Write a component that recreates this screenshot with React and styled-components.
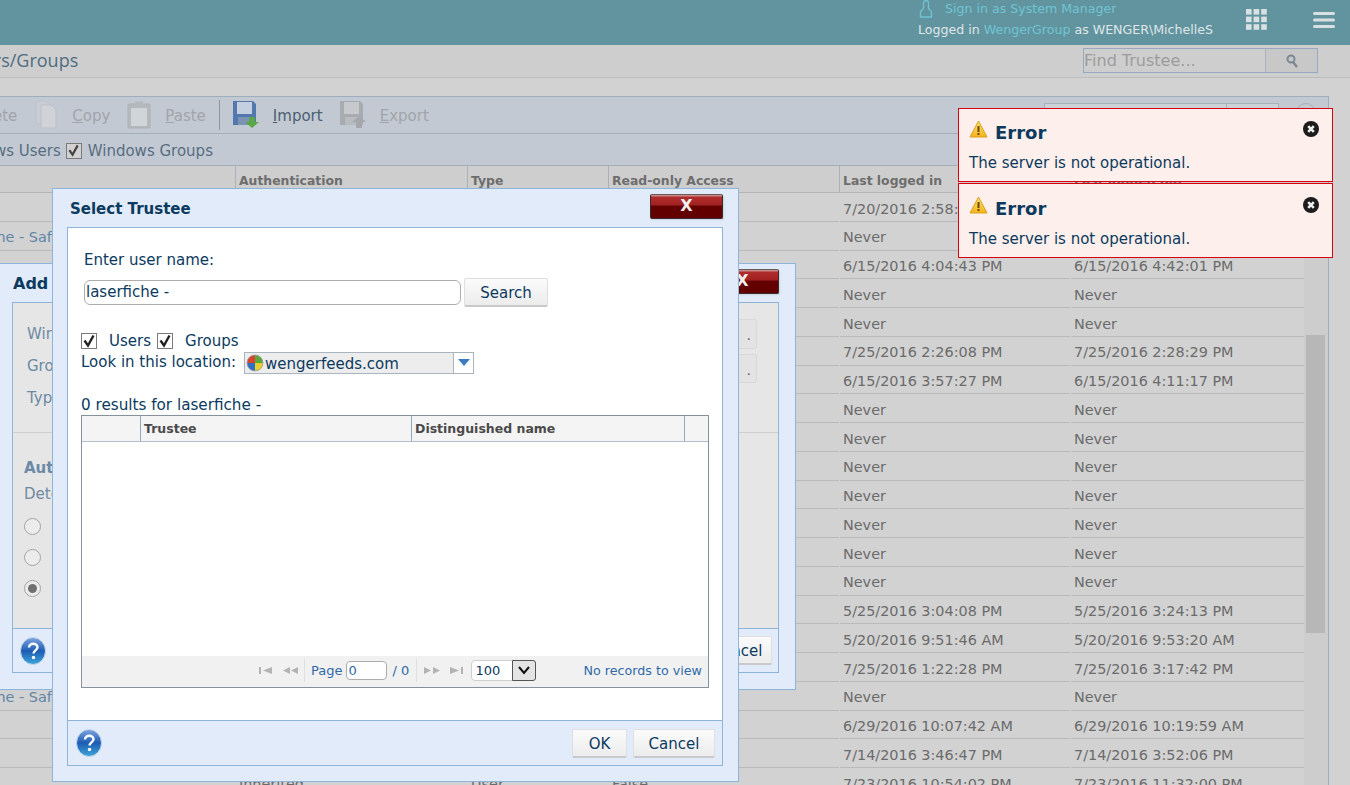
import React from "react";
import styled, { createGlobalStyle } from "styled-components";

const FONT = `"DejaVu Sans", Verdana, sans-serif`;

const Global = createGlobalStyle`
  html, body { margin: 0; padding: 0; height: 100%; overflow: hidden; background: #d2d2d2; }
  #root { width: 1350px; height: 785px; }
  * { box-sizing: border-box; }
`;

const Page = styled.div`
  position: relative;
  width: 1350px;
  height: 785px;
  overflow: hidden;
  font-family: ${FONT};
  font-size: 14.4px;
  color: #6b6b6b;
  display: flex;
  flex-direction: column;
`;

const Header = styled.header`
  flex: 0 0 45px;
  background: #62949f;
  display: flex;
  justify-content: flex-end;
  align-items: flex-start;
  padding-right: 15px;
`;
const UserBlock = styled.div`
  margin-right: 33px;
  font-size: 12.6px;
  color: #dfe6e8;
`;
const SignInLine = styled.div`
  height: 15px;
  margin-top: 1px;
  display: flex;
  align-items: center;
  gap: 12px;
  margin-left: 1px;
  color: #6fc4d4;
`;
const LoggedLine = styled.div`
  margin-top: 6px;
  line-height: 15px;
  white-space: nowrap;
`;
const HeaderLink = styled.span`
  color: #6fc4d4;
`;
const AppsGrid = styled.svg`
  margin-top: 9px;
  margin-right: 46px;
`;
const Hamburger = styled.svg`
  margin-top: 12px;
`;

const TitleBar = styled.div`
  flex: 0 0 33px;
  background: #cecece;
  border-bottom: 1px solid #bdbdbd;
  display: flex;
  align-items: center;
  justify-content: space-between;
  padding-right: 32px;
`;
const Title = styled.h1`
  margin: -2px 0 0 -38px;
  font-size: 18px;
  font-weight: 400;
  color: #4f6d82;
  font-family: "Open Sans", ${FONT};
  white-space: nowrap;
`;
const FindBox = styled.div`
  width: 235px;
  height: 25px;
  display: flex;
  border: 1px solid #97a9bf;
  margin-top: -1px;
`;
const FindInput = styled.div`
  flex: 1;
  font-size: 16px;
  line-height: 23px;
  color: #9c9c9c;
  white-space: nowrap;
`;
const FindButton = styled.div`
  width: 52px;
  background: #c8c8c8;
  border-left: 1px solid #a9b4c2;
  display: flex;
  align-items: center;
  justify-content: center;
`;

const Gap = styled.div`
  flex: 0 0 18px;
`;

const Panel = styled.section`
  flex: 1;
  min-height: 0;
  margin-left: -54px;
  margin-right: 21px;
  border: 1px solid #9eaebf;
  border-bottom: 0;
  display: flex;
  flex-direction: column;
  overflow: hidden;
`;
const Toolbar = styled.div`
  flex: 0 0 37px;
  background: #c3c9d2;
  border-bottom: 1px solid #a5adb8;
  display: flex;
  align-items: center;
  position: relative;
`;
const ToolLabel = styled.span`
  font-size: 15px;
  color: ${(p) => (p.$on ? "#4a6074" : "#9fa5ab")};
  margin-left: ${(p) => p.$ml || 0}px;
  margin-top: 2px;
  white-space: nowrap;
`;
const ToolIcon = styled.svg`
  flex: none;
  margin-left: ${(p) => p.$ml || 0}px;
  margin-top: -1px;
`;
const Sep = styled.div`
  width: 1px;
  height: 30px;
  background: #8e979f;
  margin-left: 13px;
  margin-right: 12px;
`;
const FilterRow = styled.div`
  flex: 0 0 32px;
  background: #c3c9d2;
  border-bottom: 1px solid #a5adb8;
  display: flex;
  align-items: center;
  padding-top: 2px;
  font-size: 15px;
  color: #566d82;
  white-space: nowrap;
`;
const MiniCheck = styled.span`
  width: 16px;
  height: 16px;
  margin: 0 6px 0 5px;
  border: 1px solid #7a7a7a;
  background: #d2d2d2;
  display: inline-flex;
  align-items: center;
  justify-content: center;
  flex: none;
`;
const TopSearch = styled.div`
  position: absolute;
  right: 49px;
  top: 6px;
  width: 235px;
  height: 32px;
  border: 1px solid #a8b0ba;
  background: #cdd2d9;
  display: flex;
  justify-content: flex-end;
`;
const TopSearchButton = styled.div`
  width: 52px;
  border-left: 1px solid #a8b0ba;
`;
const TopHelp = styled.div`
  position: absolute;
  right: 12px;
  top: 6px;
  width: 20px;
  height: 20px;
  border-radius: 50%;
  border: 1px solid #a8b0ba;
`;

const TableArea = styled.div`
  flex: 1;
  min-height: 0;
  display: flex;
  background: #d2d2d2;
`;
const Table = styled.div`
  flex: 1;
  min-width: 0;
`;
const COLS = "288px 232px 141px 231px 231px 234px";
const HeadRow = styled.div`
  height: 27.2px;
  display: grid;
  grid-template-columns: ${COLS};
  background: #cecece;
  border-bottom: 1px solid #b4b4b4;
`;
const HeadCell = styled.div`
  border-left: 1px solid #a9b1bb;
  padding: 7px 0 0 3px;
  font-size: 12.4px;
  font-weight: 700;
  color: #6d6d6d;
  white-space: nowrap;
  overflow: hidden;
  &:first-child { border-left: 0; }
`;
const Row = styled.div`
  height: 28.75px;
  display: grid;
  grid-template-columns: ${COLS};
  white-space: nowrap;
`;
const Cell = styled.div`
  margin-left: 1px;
  padding: 2.5px 0 0 3px;
  line-height: 26px;
  border-bottom: 1px solid #bababa;
  overflow: hidden;
`;
const NameCell = styled(Cell)`
  color: #5f86a8;
  margin-left: 0;
  padding-left: 21px;
`;
const Scrollbar = styled.div`
  flex: 0 0 24px;
  background: #cdcdcd;
  padding-top: 169px;
`;
const ScrollThumb = styled.div`
  height: 298px;
  width: 19px;
  margin-left: 2px;
  background: #b7b7b7;
`;

/* modals */
const AddModal = styled.div`
  position: absolute;
  left: -31px;
  top: 263px;
  width: 827px;
  height: 427px;
  background: #e1ebf9;
  border: 1px solid #8db4d9;
  display: flex;
  flex-direction: column;
  padding: 0 16px 16px 42px;
`;
const AddHead = styled.div`
  flex: 0 0 38px;
  display: flex;
  justify-content: space-between;
  align-items: center;
  padding-left: 1px;
  font-weight: 700;
  font-size: 16px;
  color: #0c3a5e;
`;
const AddBody = styled.div`
  flex: 1;
  min-height: 0;
  background: #e6e6e6;
  border: 1px solid #8db4d9;
  display: flex;
  flex-direction: column;
  color: #6d8aa3;
  position: relative;
`;
const AddFields = styled.div`
  flex: 0 0 130px;
  border-bottom: 1px solid #cfcfcf;
  padding: 22px 0 0 14px;
  display: flex;
  flex-direction: column;
  gap: 13px;
  font-size: 15px;
  line-height: 19px;
`;
const AddAuth = styled.div`
  flex: 1;
  padding: 26px 0 0 11px;
  font-size: 15px;
`;
const AddAuthTitle = styled.div`
  font-weight: 700;
  color: #6a8aa6;
  line-height: 18px;
`;
const AddAuthText = styled.div`
  margin-top: 8px;
  line-height: 18px;
`;
const Radios = styled.div`
  margin-top: 15px;
  display: flex;
  flex-direction: column;
  gap: 14px;
`;
const Radio = styled.span`
  width: 17px;
  height: 17px;
  border-radius: 50%;
  border: 1px solid #a3a3a3;
  background: #ececec;
  display: flex;
  align-items: center;
  justify-content: center;
  &::after {
    content: "";
    width: 9px;
    height: 9px;
    border-radius: 50%;
    background: ${(p) => (p.$on ? "#707070" : "transparent")};
  }
`;
const AddFoot = styled.div`
  flex: 0 0 44px;
  border-top: 1px solid #8db4d9;
  background: #e1ebf9;
  display: flex;
  justify-content: space-between;
  align-items: center;
  padding: 0 6px 0 7px;
`;
const SideButton = styled.div`
  position: absolute;
  right: 21px;
  top: ${(p) => p.$top}px;
  width: 30px;
  height: ${(p) => p.$h}px;
  background: #e3e3e3;
  border: 1px solid #d8d8d8;
  border-radius: 2px;
  color: #6a6a6a;
  text-align: right;
  padding-right: 5px;
  line-height: 30px;
`;

const Trustee = styled.div`
  position: absolute;
  left: 52px;
  top: 188px;
  width: 687px;
  height: 594px;
  background: #e1ebf9;
  border: 1px solid #8db4d9;
  display: flex;
  flex-direction: column;
  padding: 0 15px 15px 14px;
  color: #0c3a5e;
  font-size: 15px;
`;
const DialogHead = styled.div`
  flex: 0 0 38px;
  display: flex;
  justify-content: space-between;
  align-items: center;
  padding-left: 3px;
`;
const DialogTitle = styled.div`
  font-size: 15px;
  font-weight: 700;
  color: #0c3a5e;
  margin-top: 2px;
`;
const CloseX = styled.div`
  width: 73px;
  height: 25px;
  margin-top: -4px;
  border: 1px solid #3a2a2a;
  border-top-color: #6b5a5a;
  border-radius: 2px;
  background: linear-gradient(#c98a8a 0, #c98a8a 1px, #b02c2c 2px, #a12222 42%, #620000 50%, #620000 100%);
  box-shadow: 1px 1px 2px #c9d3e2;
  color: #f4eeee;
  font-weight: 700;
  font-size: 16px;
  line-height: 21px;
  text-align: center;
`;
const DialogBox = styled.div`
  flex: 1;
  min-height: 0;
  display: flex;
  flex-direction: column;
  border: 1px solid #8db4d9;
`;
const DialogBody = styled.div`
  flex: 1;
  min-height: 0;
  background: #fff;
  padding: 23px 13px 0 13px;
  display: flex;
  flex-direction: column;
`;
const UserLabel = styled.div`
  margin-left: 3px;
  line-height: 18px;
`;
const SearchRow = styled.div`
  margin-top: 9px;
  margin-left: 3px;
  display: flex;
  align-items: center;
  gap: 3px;
`;
const TextField = styled.div`
  width: 377px;
  height: 25px;
  border: 1px solid #adadad;
  border-radius: 6px;
  line-height: 23px;
  padding-left: 1px;
`;
const PlainButton = styled.div`
  width: ${(p) => p.$w}px;
  height: 29px;
  padding-top: 2px;
  background: linear-gradient(#fbfbfb, #ececec);
  border: 1px solid #dfdfdf;
  border-bottom: 2px solid #c9c9c9;
  border-radius: 2px;
  display: flex;
  align-items: center;
  justify-content: center;
  font-size: 15px;
  color: #0c3a5e;
`;
const CheckRow = styled.div`
  margin-top: 24px;
  display: flex;
  align-items: center;
  height: 20px;
  line-height: 18px;
`;
const Box = styled.span`
  width: 16px;
  height: 16px;
  border: 1px solid #7a7a7a;
  display: inline-flex;
  align-items: center;
  justify-content: center;
  flex: none;
`;
const CheckText = styled.span`
  margin-left: ${(p) => p.$ml}px;
  margin-right: ${(p) => p.$mr || 0}px;
`;
const LocationRow = styled.div`
  display: flex;
  align-items: center;
  height: 23px;
  margin-top: -1px;
  white-space: nowrap;
`;
const Combo = styled.div`
  margin-left: 8px;
  width: 230px;
  height: 22px;
  margin-top: 2px;
  border: 1px solid #a9b4bf;
  background: #ededed;
  display: flex;
  align-items: center;
  padding-left: 1px;
  font-size: 15px;
`;
const ComboText = styled.span`
  flex: 1;
  margin: 2px 0 0 1px;
`;
const ComboArrow = styled.span`
  width: 20px;
  height: 20px;
  background: #fff;
  border-left: 1px solid #a9b4bf;
  display: flex;
  align-items: center;
  justify-content: center;
`;
const Results = styled.div`
  margin-top: 23px;
  line-height: 18px;
  font-size: 15.2px;
`;
const Grid = styled.div`
  flex: 0 0 273px;
  margin-top: 1px;
  border: 1px solid #87919e;
  display: flex;
  flex-direction: column;
`;
const GridHead = styled.div`
  flex: 0 0 26px;
  display: grid;
  grid-template-columns: 59px 271px 273px 1fr;
  background: #f4f4f4;
  border-bottom: 1px solid #b4bfcc;
`;
const GridHeadCell = styled.div`
  border-right: 1px solid #94a6bc;
  padding: 5px 0 0 3px;
  font-size: 12.5px;
  font-weight: 700;
  color: #4a4a4a;
  &:last-child { border-right: 0; }
`;
const GridBody = styled.div`
  flex: 1;
`;
const Pager = styled.div`
  flex: 0 0 31px;
  background: #f1f1f1;
  display: flex;
  align-items: center;
  padding-left: 177px;
  padding-bottom: 2px;
  font-size: 13px;
  color: #2f6aa8;
  white-space: nowrap;
`;
const PagerNav = styled.span`
  display: flex;
  align-items: center;
  height: 23px;
  width: ${(p) => p.$w}px;
  padding-left: ${(p) => p.$pl || 0}px;
  margin-right: ${(p) => p.$mr || 0}px;
  border-right: ${(p) => (p.$divider === "right" ? "1px solid #e0e0e0" : "0")};
  border-left: ${(p) => (p.$divider === "left" ? "1px solid #e0e0e0" : "0")};
`;
const NavGap = styled.span`
  width: 10px;
  flex: none;
`;
const PageInput = styled.span`
  width: 41px;
  height: 19px;
  margin: 0 5px 0 4px;
  background: #fff;
  border: 1px solid #adadad;
  border-radius: 4px;
  line-height: 17px;
  padding-left: 1px;
  color: #2f6aa8;
`;
const PageCount = styled.span`
  width: 24px;
`;
const PageSize = styled.span`
  width: 65px;
  height: 21px;
  background: #fff;
  border: 1px solid #cfcfcf;
  border-radius: 4px;
  display: flex;
  align-items: center;
  justify-content: space-between;
  color: #0c3a5e;
  padding-left: 3px;
`;
const SizeCaret = styled.span`
  width: 24px;
  height: 21px;
  margin-right: -1px;
  background: #e4e4e4;
  border: 1px solid #555;
  border-radius: 0 3px 3px 0;
  display: flex;
  align-items: center;
  justify-content: center;
`;
const NoRecords = styled.span`
  margin-left: auto;
  margin-right: 6px;
  font-size: 12.7px;
`;
const DialogFoot = styled.div`
  flex: 0 0 45px;
  border-top: 1px solid #8db4d9;
  background: #e1ebf9;
  display: flex;
  align-items: center;
  padding: 0 7px 0 8px;
  gap: 6px;
`;
const FootSpacer = styled.div`
  flex: 1;
`;

const Toast = styled.div`
  position: absolute;
  left: 958px;
  top: ${(p) => p.$top}px;
  width: 375px;
  height: ${(p) => 74 + p.$pad}px;
  padding: ${(p) => p.$pad}px 0 0 10px;
  background: #fdefeb;
  border: 1px solid #d9000d;
  color: #0c3a5e;
`;
const ToastHead = styled.div`
  height: 46px;
  display: flex;
  align-items: center;
  gap: 7px;
  font-size: 18px;
  font-weight: 700;
`;
const ToastIcon = styled.svg`
  margin-top: -7px;
`;
const ToastClose = styled.svg`
  position: absolute;
  right: 13px;
  top: ${(p) => 12 + p.$pad}px;
`;
const ToastText = styled.div`
  font-size: 15px;
  line-height: 18px;
  margin-top: -1px;
`;

const HelpSvg = styled.svg`
  flex: none;
`;

const Help = () => (
  <HelpSvg width="26" height="30" viewBox="0 0 26 30">
    <defs>
      <linearGradient id="hg" x1="0" y1="0" x2="0" y2="1">
        <stop offset="0" stopColor="#7fa4e0" />
        <stop offset="0.5" stopColor="#1d5cb4" />
        <stop offset="1" stopColor="#3fa6d8" />
      </linearGradient>
    </defs>
    <ellipse cx="13" cy="15" rx="12.5" ry="13.5" fill="url(#hg)" stroke="#c5d8ee" />
    <path d="M9 11.5c0-5 8.5-5 8.5-.2 0 3-4 3.2-4 6.2" fill="none" stroke="#fff" strokeWidth="2.4" />
    <circle cx="13.5" cy="21.5" r="1.7" fill="#fff" />
  </HelpSvg>
);

const Tick = ({ size = 14, color = "#222" }) => (
  <svg width={size} height={size} viewBox="0 0 14 14">
    <path d="M2.5 6.5 6 11.5 11.5 1.5" fill="none" stroke={color} strokeWidth="2.4" />
  </svg>
);

const DocIcon = () => (
  <ToolIcon $ml={18} width="22" height="29" viewBox="0 0 22 29">
    <path d="M1 1h10l4 4v19H1z" fill="#c9cdd3" stroke="#bec3c9" />
    <path d="M6 5h10l5 5v18H6z" fill="#cfd3d8" stroke="#bcc1c7" />
  </ToolIcon>
);
const PasteIcon = () => (
  <ToolIcon $ml={17} width="24" height="28" viewBox="0 0 24 28">
    <rect x="1" y="3" width="22" height="24" rx="1" fill="#b4b9bd" stroke="#adb1b5" />
    <rect x="4" y="7" width="16" height="18" fill="#d2d5d8" />
    <rect x="8" y="0.5" width="8" height="5" fill="#b4b9bd" />
  </ToolIcon>
);
const DiskIcon = ({ on }) => {
  const a = on ? "#5278ad" : "#a8acb1";
  const b = on ? "#c4cfdf" : "#c7cacd";
  const g = on ? "#5aa845" : "#a4a8ac";
  return (
    <ToolIcon $ml={on ? 0 : 16} width="28" height="29" viewBox="0 0 28 29">
      <path d="M1 1h20l3 3v21H1z" fill={a} />
      <rect x="5" y="2" width="15" height="12" fill={b} />
      <rect x="6" y="17" width="13" height="8" fill={on ? "#7d93b3" : "#b8bbbf"} />
      {on ? (
        <path d="M17 17h6v5h4l-7 6-7-6h4z" fill={g} />
      ) : (
        <path d="M20 16l7 6h-4v6h-6v-6h-4z" fill={g} />
      )}
    </ToolIcon>
  );
};

const NavIcon = ({ d, w = 14 }) => (
  <svg width={w} height="9" viewBox={`0 0 ${w} 9`}>
    <path d={d} fill="#b3b3b3" />
  </svg>
);

const rows = [
  ["", "", "", "", "7/20/2016 2:58:11 PM", "7/20/2016 3:02:45 PM"],
  ["Online - Safe", "", "", "", "Never", "Never"],
  ["", "", "", "", "6/15/2016 4:04:43 PM", "6/15/2016 4:42:01 PM"],
  ["", "", "", "", "Never", "Never"],
  ["", "", "", "", "Never", "Never"],
  ["", "", "", "", "7/25/2016 2:26:08 PM", "7/25/2016 2:28:29 PM"],
  ["", "", "", "", "6/15/2016 3:57:27 PM", "6/15/2016 4:11:17 PM"],
  ["", "", "", "", "Never", "Never"],
  ["", "", "", "", "Never", "Never"],
  ["", "", "", "", "Never", "Never"],
  ["", "", "", "", "Never", "Never"],
  ["", "", "", "", "Never", "Never"],
  ["", "", "", "", "Never", "Never"],
  ["", "", "", "", "Never", "Never"],
  ["", "", "", "", "5/25/2016 3:04:08 PM", "5/25/2016 3:24:13 PM"],
  ["", "", "", "", "5/20/2016 9:51:46 AM", "5/20/2016 9:53:20 AM"],
  ["", "", "", "", "7/25/2016 1:22:28 PM", "7/25/2016 3:17:42 PM"],
  ["Online - Safe", "", "", "", "Never", "Never"],
  ["", "", "", "", "6/29/2016 10:07:42 AM", "6/29/2016 10:19:59 AM"],
  ["", "", "", "", "7/14/2016 3:46:47 PM", "7/14/2016 3:52:06 PM"],
  ["", "Inherited", "User", "False", "7/23/2016 10:54:02 PM", "7/23/2016 11:32:00 PM"],
];

const heads = ["", "Authentication", "Type", "Read-only Access", "Last logged in", "Last logged out"];

const ErrorToast = ({ top, pad }) => (
  <Toast $top={top} $pad={pad}>
    <ToastHead>
      <ToastIcon width="19" height="18" viewBox="0 0 19 18">
        <defs>
          <linearGradient id="warn" x1="0" y1="0" x2="0" y2="1">
            <stop offset="0" stopColor="#fbe27a" />
            <stop offset="1" stopColor="#f3b31a" />
          </linearGradient>
        </defs>
        <path d="M9.5 1 18 17H1z" fill="url(#warn)" stroke="#d9a21c" strokeLinejoin="round" />
        <rect x="8.5" y="6" width="2" height="6" fill="#6b4a00" />
        <rect x="8.5" y="13" width="2" height="2" fill="#6b4a00" />
      </ToastIcon>
      Error
    </ToastHead>
    <ToastText>The server is not operational.</ToastText>
    <ToastClose $pad={pad} width="16" height="16" viewBox="0 0 16 16">
      <circle cx="8" cy="8" r="8" fill="#1c1c1c" />
      <path d="M5.2 5.2l5.6 5.6M10.8 5.2l-5.6 5.6" stroke="#eee" strokeWidth="2.6" />
    </ToastClose>
  </Toast>
);

export default function App() {
  return (
    <Page>
      <Global />
      <Header>
        <UserBlock>
          <SignInLine>
            <svg width="14" height="18" viewBox="0 0 14 18">
              <path d="M4.5 8.5V3a2.5 2.5 0 0 1 5 0v5.5l3 3V17h-11v-5.5z" fill="none" stroke="#6fc4d4" strokeWidth="1.3" />
            </svg>
            Sign in as System Manager
          </SignInLine>
          <LoggedLine>
            Logged in <HeaderLink>WengerGroup</HeaderLink> as WENGER\MichelleS
          </LoggedLine>
        </UserBlock>
        <AppsGrid width="21" height="21" viewBox="0 0 21 21" fill="#d9e0e2">
          {[0, 7.6, 15.2].flatMap((y) =>
            [0, 7.6, 15.2].map((x) => <rect key={`${x}-${y}`} x={x} y={y} width="5.6" height="5.6" />)
          )}
        </AppsGrid>
        <Hamburger width="22" height="16" viewBox="0 0 22 16" fill="#d9e0e2">
          <rect y="0" width="22" height="3" rx="1.5" />
          <rect y="6.5" width="22" height="3" rx="1.5" />
          <rect y="13" width="22" height="3" rx="1.5" />
        </Hamburger>
      </Header>
      <TitleBar>
        <Title>Users/Groups</Title>
        <FindBox>
          <FindInput>Find Trustee...</FindInput>
          <FindButton>
            <svg width="12" height="14" viewBox="0 0 12 14">
              <circle cx="5" cy="5" r="3.5" fill="none" stroke="#7b8894" strokeWidth="2" />
              <path d="M7 8l4 5" stroke="#7b8894" strokeWidth="2.4" />
            </svg>
          </FindButton>
        </FindBox>
      </TitleBar>
      <Gap />
      <Panel>
        <Toolbar>
          <ToolLabel $ml={21}>Delete</ToolLabel>
          <DocIcon />
          <ToolLabel $ml={15}>
            <u>C</u>opy
          </ToolLabel>
          <PasteIcon />
          <ToolLabel $ml={14}>
            <u>P</u>aste
          </ToolLabel>
          <Sep />
          <DiskIcon on />
          <ToolLabel $on $ml={13}>
            <u>I</u>mport
          </ToolLabel>
          <DiskIcon />
          <ToolLabel $ml={13}>
            <u>E</u>xport
          </ToolLabel>
          <TopSearch>
            <TopSearchButton />
          </TopSearch>
          <TopHelp />
        </Toolbar>
        <FilterRow>
          Windows Users
          <MiniCheck>
            <Tick size={13} color="#444" />
          </MiniCheck>
          Windows Groups
        </FilterRow>
        <TableArea>
          <Table>
            <HeadRow>
              {heads.map((h, i) => (
                <HeadCell key={i}>{h}</HeadCell>
              ))}
            </HeadRow>
            {rows.map((r, i) => (
              <Row key={i}>
                <NameCell>{r[0]}</NameCell>
                {r.slice(1).map((c, j) => (
                  <Cell key={j}>{c}</Cell>
                ))}
              </Row>
            ))}
          </Table>
          <Scrollbar>
            <ScrollThumb />
          </Scrollbar>
        </TableArea>
      </Panel>

      <AddModal>
        <AddHead>
          Add Trustee
          <CloseX>X</CloseX>
        </AddHead>
        <AddBody>
          <AddFields>
            <div>Windows user:</div>
            <div>Group:</div>
            <div>Type:</div>
          </AddFields>
          <AddAuth>
            <AddAuthTitle>Authentication</AddAuthTitle>
            <AddAuthText>Determine how this user signs in</AddAuthText>
            <Radios>
              <Radio />
              <Radio />
              <Radio $on />
            </Radios>
          </AddAuth>
          <SideButton $top={16} $h={30}>.</SideButton>
          <SideButton $top={51} $h={29}>.</SideButton>
          <AddFoot>
            <Help />
            <PlainButton $w={70}>Cancel</PlainButton>
          </AddFoot>
        </AddBody>
      </AddModal>

      <Trustee>
        <DialogHead>
          <DialogTitle>Select Trustee</DialogTitle>
          <CloseX>X</CloseX>
        </DialogHead>
        <DialogBox>
          <DialogBody>
            <UserLabel>Enter user name:</UserLabel>
            <SearchRow>
              <TextField>laserfiche -</TextField>
              <PlainButton $w={84}>Search</PlainButton>
            </SearchRow>
            <CheckRow>
              <Box>
                <Tick />
              </Box>
              <CheckText $ml={12} $mr={6}>Users</CheckText>
              <Box>
                <Tick />
              </Box>
              <CheckText $ml={12}>Groups</CheckText>
            </CheckRow>
            <LocationRow>
              Look in this location:
              <Combo>
                <svg width="18" height="18" viewBox="0 0 18 18">
                  <path d="M9 9V1a8 8 0 0 1 8 8z" fill="#5aa83a" />
                  <path d="M9 9h8a8 8 0 0 1-8 8z" fill="#e8cf2a" />
                  <path d="M9 9v8a8 8 0 0 1-8-8z" fill="#2f6fc4" />
                  <path d="M9 9H1a8 8 0 0 1 8-8z" fill="#d8452e" />
                  <circle cx="9" cy="9" r="8" fill="none" stroke="#9a9a9a" strokeWidth="0.8" />
                </svg>
                <ComboText>wengerfeeds.com</ComboText>
                <ComboArrow>
                  <svg width="12" height="7" viewBox="0 0 12 7">
                    <path d="M0 0h12L6 7z" fill="#3a7cc2" />
                  </svg>
                </ComboArrow>
              </Combo>
            </LocationRow>
            <Results>0 results for laserfiche -</Results>
            <Grid>
              <GridHead>
                <GridHeadCell />
                <GridHeadCell>Trustee</GridHeadCell>
                <GridHeadCell>Distinguished name</GridHeadCell>
                <GridHeadCell />
              </GridHead>
              <GridBody />
              <Pager>
                <PagerNav $w={46} $mr={6} $divider="right">
                  <NavIcon d="M0 1h2v7H0zM13 1v7L4 4.500z" />
                  <NavGap />
                  <NavIcon d="M7 1v7L0 4.500zM15 1v7L8 4.500z" w={16} />
                </PagerNav>
                Page
                <PageInput>0</PageInput>
                <PageCount>/ 0</PageCount>
                <PagerNav $w={55} $pl={7} $divider="left">
                  <NavIcon d="M0 1v7l7-3.500zM9 1v7l7-3.500z" w={16} />
                  <NavGap />
                  <NavIcon d="M0 1v7l9-3.500zM11 1h2v7h-2z" />
                </PagerNav>
                <PageSize>
                  100
                  <SizeCaret>
                    <svg width="12" height="9" viewBox="0 0 12 9">
                      <path d="M1 1l5 6 5-6" fill="none" stroke="#111" strokeWidth="2" />
                    </svg>
                  </SizeCaret>
                </PageSize>
                <NoRecords>No records to view</NoRecords>
              </Pager>
            </Grid>
          </DialogBody>
          <DialogFoot>
            <Help />
            <FootSpacer />
            <PlainButton $w={55}>OK</PlainButton>
            <PlainButton $w={82}>Cancel</PlainButton>
          </DialogFoot>
        </DialogBox>
      </Trustee>

      <ErrorToast top={108} pad={0} />
      <ErrorToast top={183} pad={1} />
    </Page>
  );
}
